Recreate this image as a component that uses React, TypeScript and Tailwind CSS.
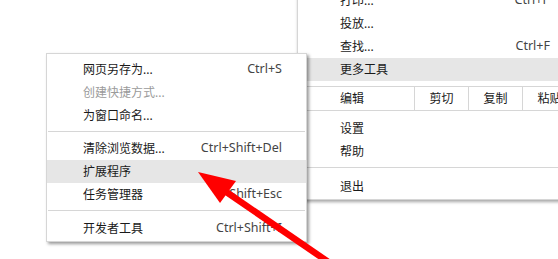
import React from "react";

const font = { fontFamily: '"Noto Sans", "Noto Sans CJK SC", sans-serif' };

function MainRow({ label, shortcut, active }: { label: string; shortcut?: string; active?: boolean }) {
  return (
    <div className={`flex h-[23px] items-center justify-between pl-[42px] pr-[36px] ${active ? "bg-[#e6e6e6]" : ""}`}>
      <span className="text-[#1a1a1a]">{label}</span>
      {shortcut && <span className="text-[12.5px] text-[#444]">{shortcut}</span>}
    </div>
  );
}

function SubRow({ label, shortcut, active, disabled }: { label: string; shortcut?: string; active?: boolean; disabled?: boolean }) {
  return (
    <div className={`flex h-[23px] items-center justify-between pl-[36px] pr-[24px] ${active ? "bg-[#e6e6e6]" : ""}`}>
      <span className={disabled ? "text-[#9a9a9a]" : "text-[#1a1a1a]"}>{label}</span>
      {shortcut && <span className="text-[12.5px] text-[#444]">{shortcut}</span>}
    </div>
  );
}

export default function App() {
  return (
    <div className="relative h-[259px] w-[558px] overflow-hidden bg-white text-[12px] leading-none" style={font}>
      {/* main menu */}
      <div className="absolute left-[297px] top-[-16px] w-[290px] border border-[#d6d6d6] bg-white pt-[4px] pb-[1px] shadow-[1px_2px_3px_rgba(0,0,0,0.35)]">
        <MainRow label="打印..." shortcut="Ctrl+P" />
        <MainRow label="投放..." />
        <MainRow label="查找..." shortcut="Ctrl+F" />
        <MainRow label="更多工具" active />
        <div className="mt-[5px] flex h-[25px] items-stretch border-y border-[#d6d6d6]">
          <div className="flex w-[116px] items-center pl-[42px] text-[#1a1a1a]">编辑</div>
          <div className="flex w-[54px] items-center justify-center border-l border-[#d6d6d6] text-[#1a1a1a]">剪切</div>
          <div className="flex w-[54px] items-center justify-center border-l border-[#d6d6d6] text-[#1a1a1a]">复制</div>
          <div className="flex w-[54px] items-center justify-center border-l border-[#d6d6d6] text-[#1a1a1a]">粘贴</div>
        </div>
        <div className="mt-[6px]">
          <MainRow label="设置" />
          <MainRow label="帮助" />
        </div>
        <div className="mx-[1px] mt-[4px] mb-[7px] h-px bg-[#d6d6d6]" />
        <MainRow label="退出" />
      </div>

      {/* sub menu */}
      <div className="absolute left-[46px] top-[53px] w-[261px] border border-[#d6d6d6] bg-white pt-[4px] pb-[1px] shadow-[2px_2px_3px_rgba(0,0,0,0.4)]">
        <SubRow label="网页另存为..." shortcut="Ctrl+S" />
        <SubRow label="创建快捷方式..." disabled />
        <SubRow label="为窗口命名..." />
        <div className="mx-[1px] mt-[4px] mb-[5px] h-px bg-[#d6d6d6]" />
        <SubRow label="清除浏览数据..." shortcut="Ctrl+Shift+Del" />
        <SubRow label="扩展程序" active />
        <SubRow label="任务管理器" shortcut="Shift+Esc" />
        <div className="mx-[1px] mt-[4px] mb-[6px] h-px bg-[#d6d6d6]" />
        <SubRow label="开发者工具" shortcut="Ctrl+Shift+I" />
      </div>

      {/* red arrow */}
      <svg className="absolute left-0 top-0" width="558" height="259" viewBox="0 0 558 259">
        <line x1="222" y1="189" x2="340" y2="270" stroke="#ff0000" strokeWidth="6.5" />
        <polygon points="198,172 236,181 220,203" fill="#ff0000" />
      </svg>
    </div>
  );
}
